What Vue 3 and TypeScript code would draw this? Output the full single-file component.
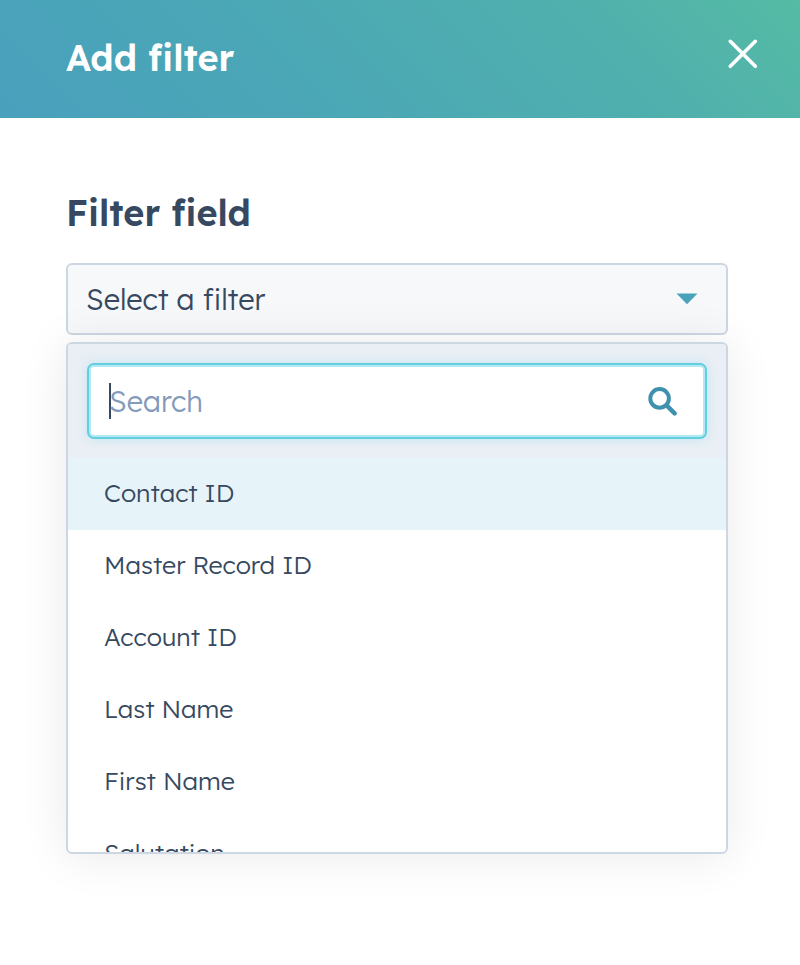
<script setup lang="ts">
import { computed, ref } from 'vue'

const fields: string[] = [
  'Contact ID',
  'Master Record ID',
  'Account ID',
  'Last Name',
  'First Name',
  'Salutation',
]

const visible = ref(true)
const open = ref(true)
const query = ref('')
const selected = ref('')
const active = ref(fields[0])

const matches = computed(() =>
  fields.filter((field) => field.toLowerCase().includes(query.value.toLowerCase())),
)

function choose(field: string): void {
  selected.value = field
  open.value = false
}
</script>

<template>
  <main v-if="visible" class="panel">
    <header class="header">
      <h1 class="title">Add filter</h1>
      <button class="close" type="button" aria-label="Close" @click="visible = false">
        <svg viewBox="0 0 30 30" width="30" height="30" aria-hidden="true">
          <path d="M2.3 2.3 27.3 27.3M27.3 2.3 2.3 27.3" fill="none" stroke="#fff" stroke-width="3.6" stroke-linecap="round" />
        </svg>
      </button>
    </header>

    <section class="body">
      <h2 id="field-label" class="label">Filter field</h2>
      <button
        class="trigger"
        type="button"
        aria-haspopup="listbox"
        aria-labelledby="field-label field-value"
        :aria-expanded="open"
        @click="open = !open"
      >
        <span id="field-value">{{ selected || 'Select a filter' }}</span>
        <svg class="arrow" viewBox="0 0 22 12" width="22" height="12" aria-hidden="true">
          <path d="M.5.5h21L11 11.2z" fill="#4aa3bb" />
        </svg>
      </button>

      <div v-if="open" class="dropdown">
        <div class="search-area">
          <label class="search">
            <span v-show="!query" class="cursor" aria-hidden="true"></span>
            <input v-model="query" class="search-input" type="text" placeholder="Search" aria-label="Search" />
            <svg class="magnifier" viewBox="0 0 30 30" width="30" height="30" aria-hidden="true">
              <circle cx="11.6" cy="12.4" r="9.3" fill="none" stroke="#3f91ad" stroke-width="4" />
              <path d="M18.6 19.4 26.6 27.4" fill="none" stroke="#3f91ad" stroke-width="4.4" stroke-linecap="round" />
            </svg>
          </label>
        </div>
        <ul class="options" role="listbox" aria-labelledby="field-label">
          <li v-for="field in matches" :key="field" role="presentation">
            <button
              class="option"
              :class="{ active: field === active }"
              type="button"
              role="option"
              :aria-selected="field === selected"
              @mouseenter="active = field"
              @click="choose(field)"
            >
              {{ field }}
            </button>
          </li>
        </ul>
      </div>
    </section>
  </main>
</template>

<style>
body {
  background: #fff;
}
</style>

<style scoped>
.panel {
  color: #364960;
  font-family: Lexend, 'Lexend Deca', Inter, 'Liberation Sans', sans-serif;
  font-weight: 300;
}

.panel * {
  box-sizing: border-box;
}

button,
input {
  margin: 0;
  color: inherit;
  font-family: inherit;
  font-weight: inherit;
}

.header {
  display: flex;
  align-items: flex-start;
  justify-content: space-between;
  height: 118px;
  padding: 36px 42px 0 66px;
  background: linear-gradient(45deg, #49a0bd 0%, #4ba8b5 40%, #50b0ad 75%, #55bba4 100%);
}

.title,
.label {
  margin: 0;
  font-size: 36px;
  font-weight: 600;
  line-height: 44px;
}

.title {
  color: #fff;
}

.close {
  display: flex;
  margin-top: 3px;
  padding: 0;
  border: 0;
  background: none;
  cursor: pointer;
}

.body {
  padding: 72px 72px 48px 66px;
}

.label {
  margin: 1px 0 28px;
}

.trigger {
  display: flex;
  align-items: center;
  justify-content: space-between;
  width: 100%;
  height: 72px;
  padding: 0 28px 0 18px;
  border: 2px solid #cdd7e4;
  border-radius: 6px;
  background: #f6f8fa;
  font-size: 29px;
  text-align: left;
  cursor: pointer;
}

.dropdown {
  position: relative;
  display: flex;
  flex-direction: column;
  height: 512px;
  margin-top: 7px;
  overflow: hidden;
  border: 2px solid #cdd7e4;
  border-radius: 6px;
  background: #fff;
  box-shadow: 0 2px 48px rgba(0, 0, 0, 0.09);
}

.search-area {
  flex: none;
  padding: 19px;
  background: #e9eff4;
}

.search {
  display: flex;
  align-items: center;
  height: 76px;
  padding: 0 27px 0 20px;
  border: 2px solid #62cee0;
  border-radius: 7px;
  background: #fff;
  box-shadow: inset 0 0 0 2px #b3e9f1, 0 0 10px rgba(120, 205, 245, 0.35);
}

.cursor {
  flex: none;
  width: 2px;
  height: 36px;
  margin-right: -2px;
  background: #364960;
}

.search-input {
  flex: 1;
  min-width: 0;
  padding: 0;
  border: 0;
  outline: 0;
  background: transparent;
  font-size: 29px;
  line-height: 36px;
  caret-color: transparent;
}

.search-input::placeholder {
  color: #839bbb;
  opacity: 1;
}

.options {
  flex: 1;
  min-height: 0;
  margin: 0;
  padding: 0;
  overflow-y: auto;
  scrollbar-width: none;
  list-style: none;
}

.option {
  display: block;
  width: 100%;
  height: 72px;
  padding: 0 36px 4px;
  border: 0;
  background: none;
  font-size: 25px;
  text-align: left;
  cursor: pointer;
}

.option.active {
  background: #e6f3f8;
}
</style>
